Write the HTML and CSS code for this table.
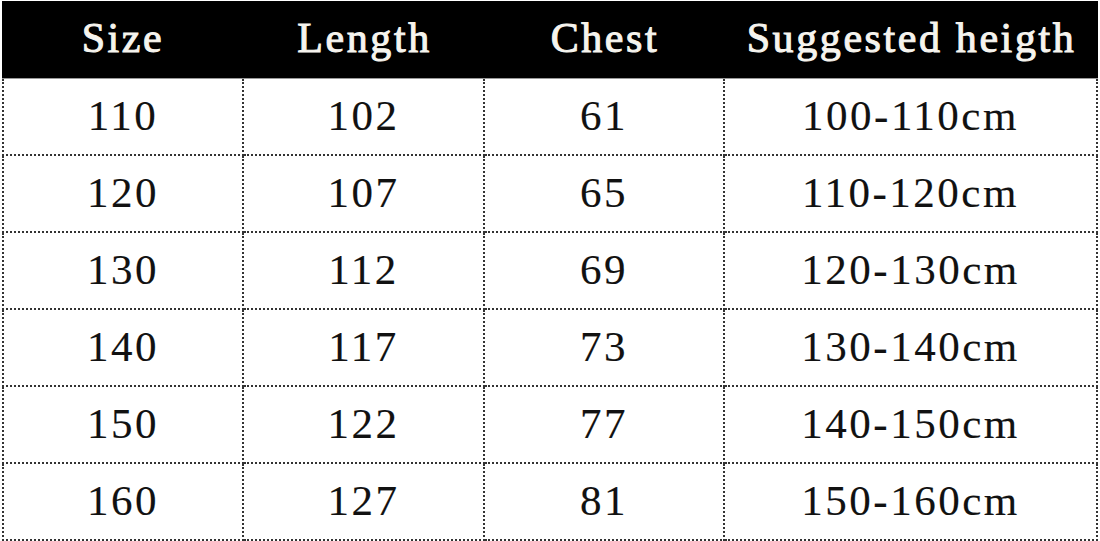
FILE: index.html
```html
<!DOCTYPE html>
<html>
<head>
<meta charset="utf-8">
<link rel="stylesheet" href="styles.css">
</head>
<body>
<div class="sheet">
  <div class="row head">
    <div class="cell">Size</div>
    <div class="cell">Length</div>
    <div class="cell">Chest</div>
    <div class="cell">Suggested heigth</div>
  </div>
  <div class="row">
    <div class="cell">110</div><div class="cell">102</div><div class="cell">61</div><div class="cell">100-110cm</div>
  </div>
  <div class="row">
    <div class="cell">120</div><div class="cell">107</div><div class="cell">65</div><div class="cell">110-120cm</div>
  </div>
  <div class="row">
    <div class="cell">130</div><div class="cell">112</div><div class="cell">69</div><div class="cell">120-130cm</div>
  </div>
  <div class="row">
    <div class="cell">140</div><div class="cell">117</div><div class="cell">73</div><div class="cell">130-140cm</div>
  </div>
  <div class="row">
    <div class="cell">150</div><div class="cell">122</div><div class="cell">77</div><div class="cell">140-150cm</div>
  </div>
  <div class="row">
    <div class="cell">160</div><div class="cell">127</div><div class="cell">81</div><div class="cell">150-160cm</div>
  </div>
</div>
</body>
</html>
```

FILE: styles.css
```css
html, body {
  margin: 0;
  padding: 0;
  background: #ffffff;
}

.sheet {
  margin: 1px 0 0 2px;
  width: 1096px;
  display: flex;
  flex-direction: column;
  font-family: "Liberation Serif", "Times New Roman", serif;
  color: #111111;
}

.row {
  display: grid;
  grid-template-columns: 242px 241px 240px 373px;
  height: 77px;
}

.cell {
  box-sizing: border-box;
  display: flex;
  align-items: center;
  justify-content: center;
  font-size: 43px;
  letter-spacing: 2.5px;
  -webkit-text-stroke: 0.15px #111111;
  border-right: 2px dotted #333333;
  border-bottom: 2px dotted #333333;
  padding-bottom: 2px;
}

.row .cell:first-child {
  border-left: 2px dotted #333333;
}

.row.head {
  height: 78px;
  background: #000000;
  border-bottom: 1px solid #9a9a9a;
  box-sizing: border-box;
}

.row.head .cell {
  border: none;
  color: #f6f4ee;
  -webkit-text-stroke: 1px #f6f4ee;
  font-size: 42px;
  letter-spacing: 2.6px;
  padding-bottom: 4px;
}
```
